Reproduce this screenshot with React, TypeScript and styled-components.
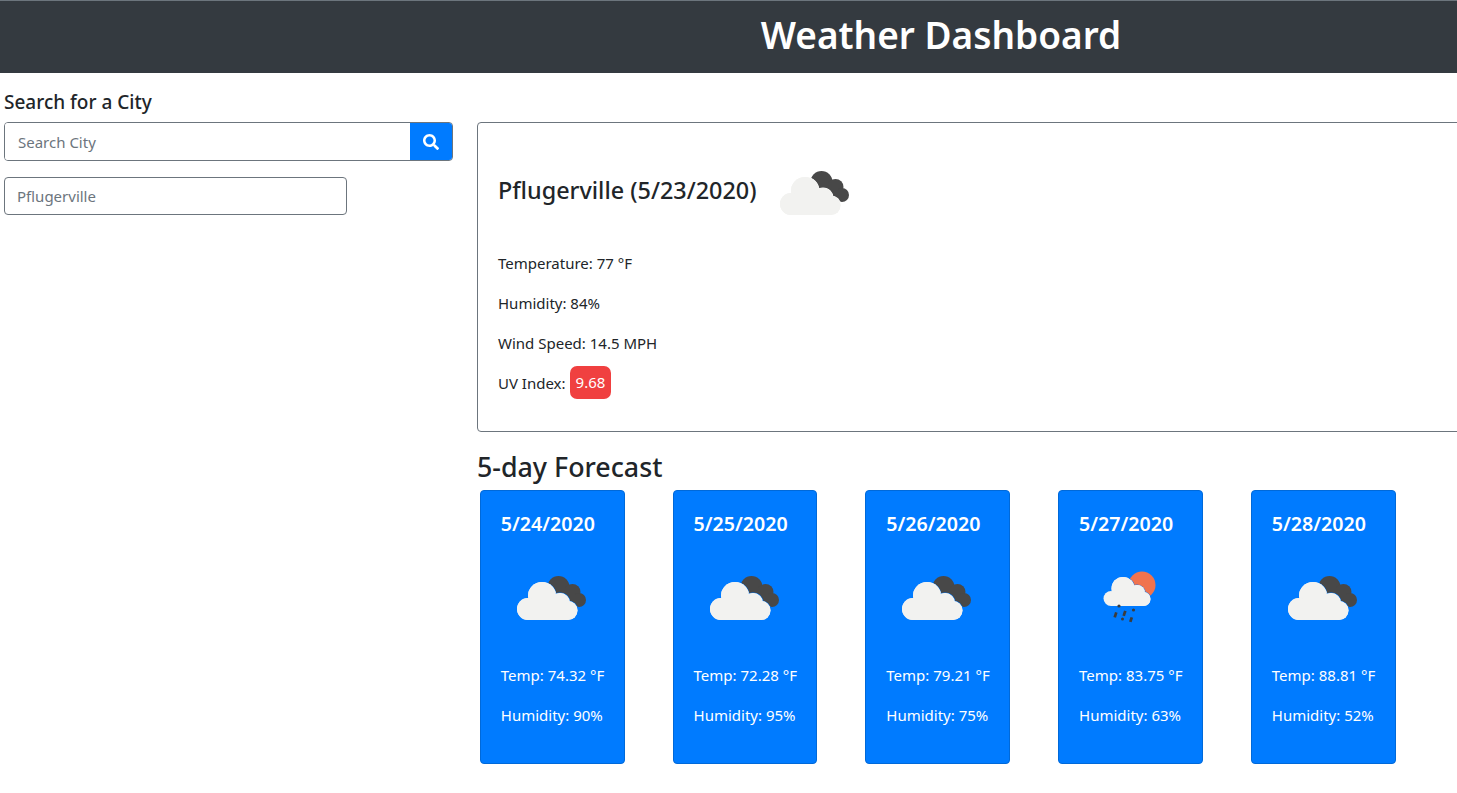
import React from 'react';
import styled, { createGlobalStyle } from 'styled-components';
import { FaSearch } from 'react-icons/fa';

const GlobalStyle = createGlobalStyle`
    * {
        box-sizing: border-box;
    }
    html, body {
        margin: 0;
        background: #fff;
        overflow: hidden;
    }
    body {
        font-family: "Noto Sans", "Open Sans", sans-serif;
        font-size: 15px;
        color: #212529;
    }
`;

const Page = styled.div`
    width: 1457px;
    height: 793px;
    overflow: hidden;
`;

const Header = styled.header`
    width: 1882px;
    height: 73px;
    padding-bottom: 5px;
    background-color: #343a40;
    border-top: 1px solid #6c757d;
    display: flex;
    justify-content: center;
    align-items: center;
`;

const Title = styled.h1`
    margin: 0;
    font-size: 37px;
    font-weight: 600;
    color: #fff;
`;

const Content = styled.div`
    display: grid;
    grid-template-columns: 449px 1400px;
    column-gap: 24px;
    padding: 16px 0 0 4px;
`;

const Sidebar = styled.aside`
    display: flex;
    flex-direction: column;
`;

const SearchLabel = styled.h2`
    margin: 0 0 7px;
    height: 26px;
    line-height: 26px;
    font-size: 19px;
    font-weight: 500;
`;

const SearchGroup = styled.div`
    display: flex;
    height: 39px;
    border: 1px solid #6c757d;
    border-radius: 4px;
    overflow: hidden;
`;

const SearchInput = styled.input`
    flex: 1;
    min-width: 0;
    border: 0;
    outline: 0;
    padding: 0 13px;
    font: inherit;
    &::placeholder {
        color: #6c757d;
        opacity: 1;
    }
`;

const SearchButton = styled.button`
    width: 42px;
    border: 0;
    padding: 0;
    color: #fff;
    background-color: #007bff;
    display: flex;
    align-items: center;
    justify-content: center;
    font-size: 16px;
`;

const HistoryItem = styled.div`
    width: 343px;
    height: 38px;
    margin-top: 16px;
    padding: 0 12px;
    border: 1px solid #6c757d;
    border-radius: 4px;
    color: #6c757d;
    line-height: 36px;
`;

const Main = styled.main`
    padding-top: 33px;
`;

const CurrentCard = styled.section`
    height: 310px;
    padding: 37px 20px 0;
    border: 1px solid #6c757d;
    border-radius: 4px;
`;

const CityRow = styled.div`
    height: 65px;
    display: flex;
    align-items: flex-start;
`;

const CityName = styled.h3`
    margin: 13px 11px 0 0;
    font-size: 23.4px;
    font-weight: 500;
    line-height: 34px;
`;

const StatList = styled.div`
    margin-top: 26px;
    display: flex;
    flex-direction: column;
    gap: 16px;
`;

const Stat = styled.div`
    height: 24px;
    line-height: 24px;
    display: flex;
    align-items: center;
`;

const UvBadge = styled.span`
    margin: -2px 0 0 4px;
    padding: 0 6px;
    height: 33px;
    line-height: 33px;
    border-radius: 7px;
    background-color: #f04040;
    color: #fff;
`;

const ForecastHeading = styled.h3`
    margin: 16px 0 5px;
    height: 37px;
    line-height: 37px;
    font-size: 26.8px;
    font-weight: 500;
`;

const ForecastRow = styled.div`
    display: flex;
    padding-left: 2.8px;
    gap: 48px;
`;

const ForecastCard = styled.article`
    width: 144.75px;
    height: 274px;
    padding: 19px 20px 0;
    border: 1px solid #0069d9;
    border-radius: 4px;
    background-color: #007bff;
    color: #fff;
`;

const ForecastDate = styled.h4`
    margin: 0;
    height: 28px;
    line-height: 28px;
    font-size: 19.6px;
    font-weight: 600;
    white-space: nowrap;
`;

const ForecastIcon = styled.div`
    height: 65px;
    margin: 27px 0 0 4px;
`;

const ForecastStats = styled.div`
    margin-top: 33px;
    display: flex;
    flex-direction: column;
    gap: 16px;
`;

const ForecastStat = styled.div`
    height: 24px;
    line-height: 24px;
    white-space: nowrap;
`;

const CloudIcon = ({ gap }: { gap: string }) => (
    <svg width="90" height="65" viewBox="0 0 90 65">
        <g fill="#484848">
            <circle cx="53.5" cy="22" r="11" />
            <circle cx="67.5" cy="27" r="8" />
            <circle cx="74" cy="35" r="7" />
            <rect x="50" y="24" width="20" height="16" />
        </g>
        <g fill="#f2f2f0" stroke={gap} strokeWidth="1.2" paintOrder="stroke">
            <circle cx="37" cy="31" r="14" />
            <circle cx="55" cy="38" r="10" />
            <circle cx="23" cy="44" r="11" />
            <circle cx="63" cy="45.5" r="9.5" />
        </g>
        <g fill="#f2f2f0">
            <circle cx="37" cy="31" r="14" />
            <circle cx="55" cy="38" r="10" />
            <circle cx="23" cy="44" r="11" />
            <circle cx="63" cy="45.5" r="9.5" />
            <rect x="23" y="34" width="40" height="21" />
        </g>
    </svg>
);

const RainIcon = () => (
    <svg width="90" height="65" viewBox="0 0 90 65">
        <g transform="translate(7 -5)">
            <circle cx="52" cy="25" r="13.5" fill="#f0734e" />
            <g fill="#f2f2f0" stroke="#007bff" strokeWidth="1.2" paintOrder="stroke">
                <circle cx="33" cy="28.5" r="11.5" />
                <circle cx="47" cy="33" r="8" />
                <circle cx="53.5" cy="39" r="7" />
            </g>
            <g fill="#f2f2f0">
                <circle cx="33" cy="28.5" r="11.5" />
                <circle cx="47" cy="33" r="8" />
                <circle cx="21" cy="38.5" r="7.5" />
                <circle cx="53.5" cy="39" r="7" />
                <rect x="21" y="33" width="33" height="13" />
            </g>
            <g fill="#3c3c3c">
                <circle cx="29" cy="46" r="1.6" />
                <circle cx="43.5" cy="50" r="1.6" />
                <circle cx="32.5" cy="59" r="1.5" />
                <path d="M25 52l2.6.8-1.6 5-2.6-.8z" />
                <path d="M34 50.5l2.6.8-1.6 5-2.6-.8z" />
                <path d="M40.5 57l2.6.8-1.5 4.4-2.6-.8z" />
            </g>
        </g>
    </svg>
);

const forecast = [
    { date: '5/24/2020', temp: '74.32', humidity: 90, rain: false },
    { date: '5/25/2020', temp: '72.28', humidity: 95, rain: false },
    { date: '5/26/2020', temp: '79.21', humidity: 75, rain: false },
    { date: '5/27/2020', temp: '83.75', humidity: 63, rain: true },
    { date: '5/28/2020', temp: '88.81', humidity: 52, rain: false },
];

const App = () => {
    return (
        <Page>
            <GlobalStyle />
            <Header>
                <Title>Weather Dashboard</Title>
            </Header>
            <Content>
                <Sidebar>
                    <SearchLabel>Search for a City</SearchLabel>
                    <SearchGroup>
                        <SearchInput placeholder="Search City" />
                        <SearchButton aria-label="Search">
                            <FaSearch />
                        </SearchButton>
                    </SearchGroup>
                    <HistoryItem>Pflugerville</HistoryItem>
                </Sidebar>
                <Main>
                    <CurrentCard>
                        <CityRow>
                            <CityName>Pflugerville (5/23/2020)</CityName>
                            <CloudIcon gap="#fff" />
                        </CityRow>
                        <StatList>
                            <Stat>Temperature: 77 °F</Stat>
                            <Stat>Humidity: 84%</Stat>
                            <Stat>Wind Speed: 14.5 MPH</Stat>
                            <Stat>
                                UV Index: <UvBadge>9.68</UvBadge>
                            </Stat>
                        </StatList>
                    </CurrentCard>
                    <ForecastHeading>5-day Forecast</ForecastHeading>
                    <ForecastRow>
                        {forecast.map((day) => (
                            <ForecastCard key={day.date}>
                                <ForecastDate>{day.date}</ForecastDate>
                                <ForecastIcon>
                                    {day.rain ? <RainIcon /> : <CloudIcon gap="#007bff" />}
                                </ForecastIcon>
                                <ForecastStats>
                                    <ForecastStat>Temp: {day.temp} °F</ForecastStat>
                                    <ForecastStat>Humidity: {day.humidity}%</ForecastStat>
                                </ForecastStats>
                            </ForecastCard>
                        ))}
                    </ForecastRow>
                </Main>
            </Content>
        </Page>
    );
};

export default App;
